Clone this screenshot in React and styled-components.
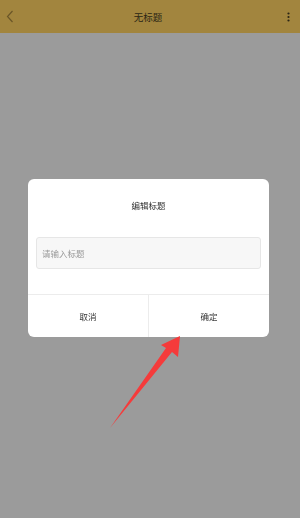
import React from 'react';
import styled, { createGlobalStyle } from 'styled-components';

const GlobalStyle = createGlobalStyle`
	html, body {
		margin: 0;
		padding: 0;
		height: 100%;
		background: #9b9b9b;
		font-family: 'Noto Sans CJK SC', 'Noto Sans', sans-serif;
	}
	#root {
		height: 100%;
	}
`;

const Page = styled.div`
	height: 518px;
	display: flex;
	flex-direction: column;
	background: #9b9b9b;
`;

const Header = styled.div`
	height: 33px;
	flex-shrink: 0;
	display: flex;
	align-items: center;
	justify-content: space-between;
	padding: 0 10px 0 6px;
	background: #a2853e;
`;

const HeaderTitle = styled.div`
	font-size: 9.5px;
	color: #2b2515;
`;

const IconSlot = styled.div`
	width: 14px;
	display: flex;
	align-items: center;
	justify-content: ${(p) => (p.right ? 'flex-end' : 'flex-start')};
`;

const Overlay = styled.div`
	position: fixed;
	inset: 0;
	display: flex;
	align-items: center;
	padding-left: 28px;
`;

const Dialog = styled.div`
	width: 241px;
	height: 158px;
	margin-top: -2px;
	background: #fff;
	border-radius: 6px;
	display: flex;
	flex-direction: column;
	overflow: hidden;
`;

const DialogTitle = styled.div`
	height: 52px;
	display: flex;
	align-items: center;
	justify-content: center;
	font-size: 8.5px;
	color: #333;
`;

const Body = styled.div`
	flex: 1;
	padding: 6px 8px 0;
`;

const Input = styled.input`
	box-sizing: border-box;
	width: 100%;
	height: 32px;
	padding: 0 5px;
	border: 1px solid #e6e6e6;
	border-radius: 3px;
	background: #f7f7f7;
	font-family: inherit;
	font-size: 8.5px;
	outline: none;

	&::placeholder {
		color: #9a9a9a;
	}
`;

const Actions = styled.div`
	height: 42px;
	display: flex;
	border-top: 1px solid #ececec;
`;

const Action = styled.div`
	flex: 1;
	display: flex;
	align-items: center;
	justify-content: center;
	font-size: 8.5px;
	color: #333;
	& + & {
		border-left: 1px solid #ececec;
	}
`;

const Arrow = styled.svg`
	position: fixed;
	left: 0;
	top: 0;
	pointer-events: none;
`;

const App = () => (
	<>
		<GlobalStyle />
		<Page>
			<Header>
				<IconSlot>
					<svg width='8' height='13' viewBox='0 0 8 13'>
						<path d='M6.5 1 L1.5 6.5 L6.5 12' fill='none' stroke='#6a5628' strokeWidth='1.2' />
					</svg>
				</IconSlot>
				<HeaderTitle>无标题</HeaderTitle>
				<IconSlot right>
					<svg width='3' height='10' viewBox='0 0 3 10'>
						<circle cx='1.5' cy='1.5' r='1.1' fill='#2b2515' />
						<circle cx='1.5' cy='5' r='1.1' fill='#2b2515' />
						<circle cx='1.5' cy='8.5' r='1.1' fill='#2b2515' />
					</svg>
				</IconSlot>
			</Header>
		</Page>
		<Overlay>
			<Dialog>
				<DialogTitle>编辑标题</DialogTitle>
				<Body>
					<Input placeholder='请输入标题' />
				</Body>
				<Actions>
					<Action>取消</Action>
					<Action>确定</Action>
				</Actions>
			</Dialog>
		</Overlay>
		<Arrow width='300' height='518' viewBox='0 0 300 518'>
			<polygon
				points='180,336 178,357 172,352 110,428 166,348 161,345'
				fill='#f53b3b'
			/>
		</Arrow>
	</>
);

export default App;
